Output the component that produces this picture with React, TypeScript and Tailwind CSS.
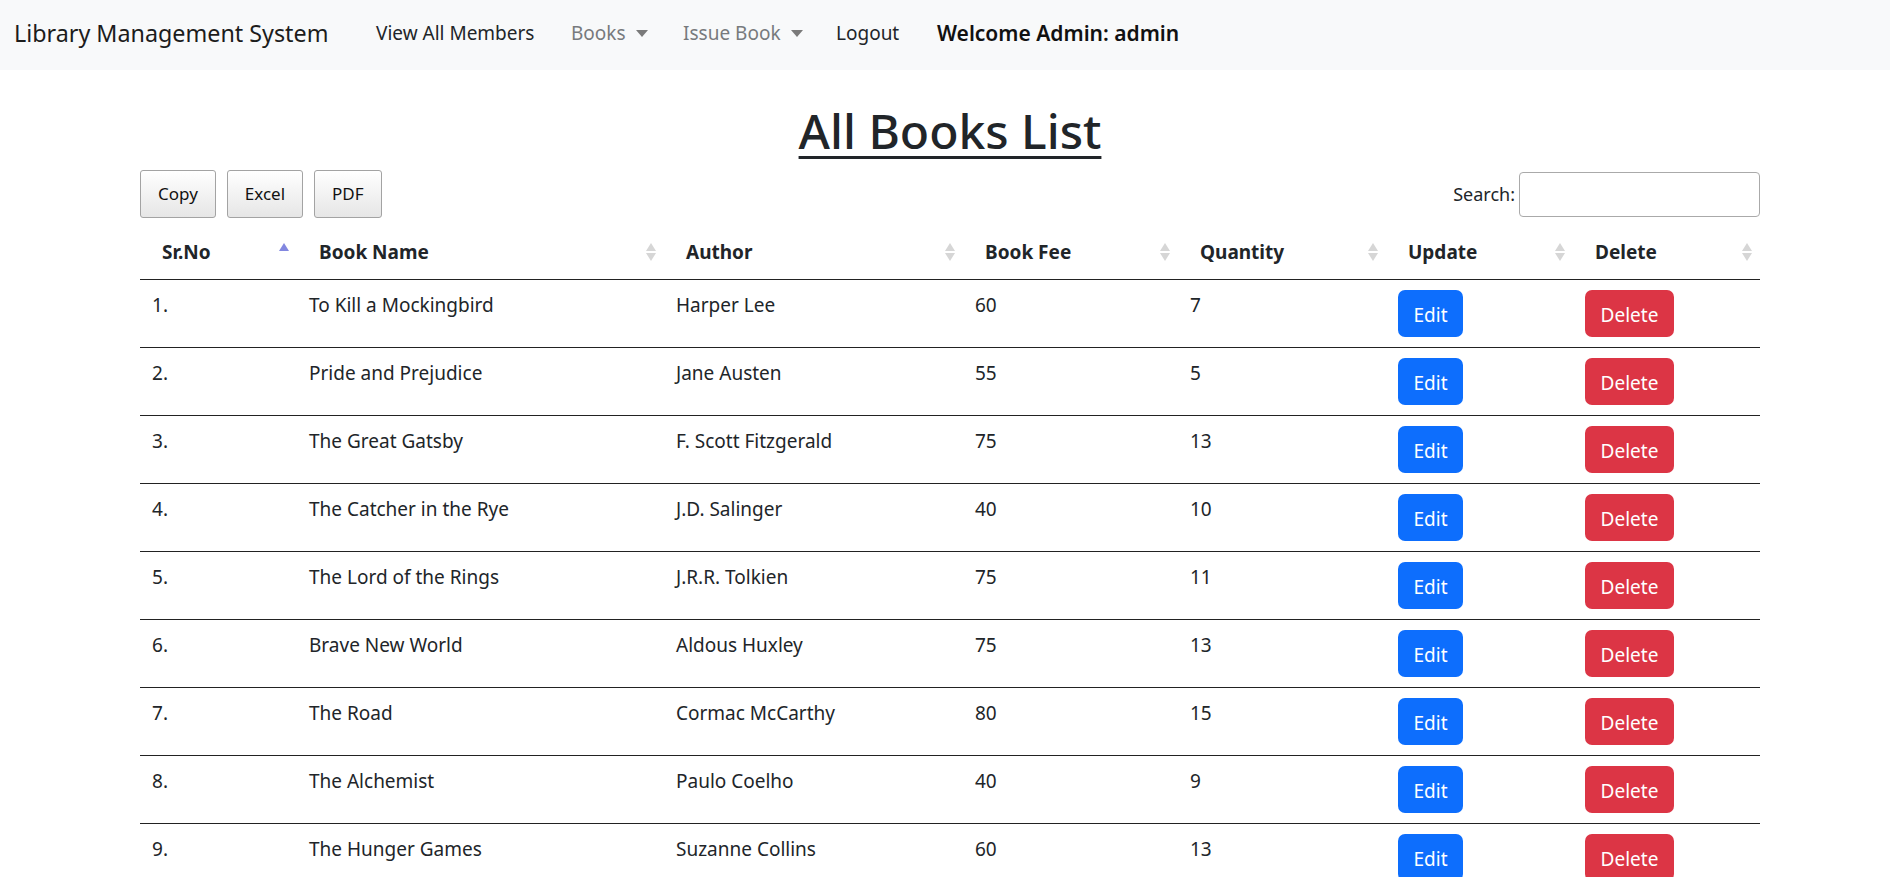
const books = [
  { name: "To Kill a Mockingbird", author: "Harper Lee", fee: 60, qty: 7 },
  { name: "Pride and Prejudice", author: "Jane Austen", fee: 55, qty: 5 },
  { name: "The Great Gatsby", author: "F. Scott Fitzgerald", fee: 75, qty: 13 },
  { name: "The Catcher in the Rye", author: "J.D. Salinger", fee: 40, qty: 10 },
  { name: "The Lord of the Rings", author: "J.R.R. Tolkien", fee: 75, qty: 11 },
  { name: "Brave New World", author: "Aldous Huxley", fee: 75, qty: 13 },
  { name: "The Road", author: "Cormac McCarthy", fee: 80, qty: 15 },
  { name: "The Alchemist", author: "Paulo Coelho", fee: 40, qty: 9 },
  { name: "The Hunger Games", author: "Suzanne Collins", fee: 60, qty: 13 },
];

const columns = [
  { label: "Sr.No", width: "w-[157px]" },
  { label: "Book Name", width: "w-[367px]" },
  { label: "Author", width: "w-[299px]" },
  { label: "Book Fee", width: "w-[215px]" },
  { label: "Quantity", width: "w-[208px]" },
  { label: "Update", width: "w-[187px]" },
  { label: "Delete", width: "w-[187px]" },
];

function SortIcon({ active }: { active?: boolean }) {
  return (
    <span className="absolute top-1/2 right-[8px] flex -translate-y-1/2 flex-col gap-[2px]">
      <svg width="10" height="8" viewBox="0 0 10 8">
        <path d="M5 0 L10 8 L0 8 Z" fill={active ? "#8287e0" : "#d6d6d6"} />
      </svg>
      <svg width="10" height="8" viewBox="0 0 10 8">
        <path d="M0 0 L10 0 L5 8 Z" fill={active ? "transparent" : "#d6d6d6"} />
      </svg>
    </span>
  );
}

function Caret() {
  return (
    <span className="ml-[10px] inline-block h-0 w-0 border-x-[6px] border-t-[7px] border-x-transparent border-t-[#7a7a7a] align-middle" />
  );
}

export default function App() {
  return (
    <div className="min-h-screen bg-white text-[19px] leading-[30px] text-[#212529] [font-family:'Noto_Sans','Open_Sans',sans-serif]">
      <nav className="flex h-[70px] items-center bg-[#f8f9fa] pb-[4px] pl-[14px]">
        <span className="w-[362px] text-[23.3px] text-[#1c1c1c]">Library Management System</span>
        <span className="w-[195px] text-[#212529]">View All Members</span>
        <span className="flex w-[112px] items-center text-[#777a7d]">
          Books
          <Caret />
        </span>
        <span className="flex w-[153px] items-center text-[#777a7d]">
          Issue Book
          <Caret />
        </span>
        <span className="w-[101px] text-[#212529]">Logout</span>
        <span className="text-[21px] font-semibold text-[#111]">Welcome Admin: admin</span>
      </nav>

      <div className="ml-[140px] w-[1620px]">
        <h1 className="mt-[31px] mb-[9px] text-center text-[48px] leading-[60px] font-medium underline decoration-[3px] underline-offset-[7px]">
          All Books List
        </h1>

        <div className="flex items-center justify-between">
          <div className="flex gap-[11px]">
            {["Copy", "Excel", "PDF"].map((b) => (
              <button
                key={b}
                className="h-[48px] rounded-[3px] border border-[#a3a3a3] bg-gradient-to-b from-white to-[#e6e6e6] px-[17px] text-[17px] text-[#111]"
              >
                {b}
              </button>
            ))}
          </div>
          <label className="flex items-center gap-[4px] text-[18px]">
            Search:
            <input className="h-[45px] w-[241px] rounded-[4px] border border-[#aaa] bg-white px-2 outline-none" />
          </label>
        </div>

        <table className="mt-[7px] w-full table-fixed border-collapse">
          <thead>
            <tr className="border-b border-[#222]">
              {columns.map((c, i) => (
                <th key={c.label} className={`${c.width} relative py-[12px] pr-[22px] pl-[22px] text-left font-bold`}>
                  {c.label}
                  <SortIcon active={i === 0} />
                </th>
              ))}
            </tr>
          </thead>
          <tbody>
            {books.map((b, i) => (
              <tr key={b.name} className="border-b border-[#222] align-top">
                <td className="px-[12px] py-[10px]">{i + 1}.</td>
                <td className="px-[12px] py-[10px]">{b.name}</td>
                <td className="px-[12px] py-[10px]">{b.author}</td>
                <td className="px-[12px] py-[10px]">{b.fee}</td>
                <td className="px-[12px] py-[10px]">{b.qty}</td>
                <td className="px-[12px] py-[10px]">
                  <button className="h-[47px] w-[65px] rounded-[7px] bg-[#0d6efd] pt-[3px] text-white">Edit</button>
                </td>
                <td className="px-[12px] py-[10px]">
                  <button className="h-[47px] w-[89px] rounded-[7px] bg-[#dc3545] pt-[3px] text-white">Delete</button>
                </td>
              </tr>
            ))}
          </tbody>
        </table>
      </div>
    </div>
  );
}
